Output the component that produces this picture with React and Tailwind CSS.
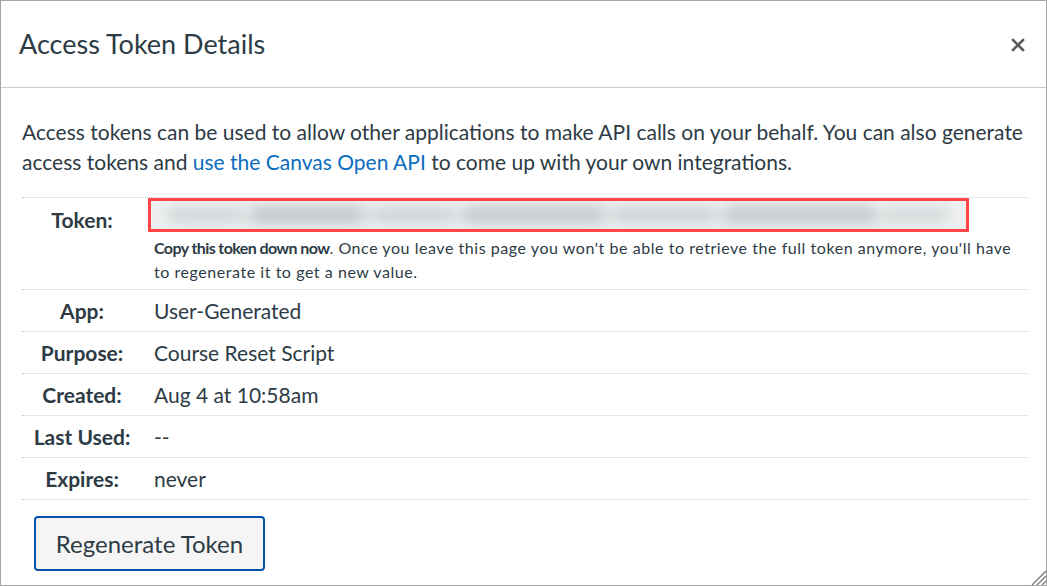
import React from 'react';

const font = { fontFamily: 'Lato, "Noto Sans", sans-serif' };

const Row = ({ label, children }) => (
  <div className="flex h-[42px] items-center border-t border-dotted border-[#c7cdd1]">
    <div className="w-[120px] shrink-0 text-center text-[21px] font-bold text-[#2d3b45]">
      {label}
    </div>
    <div className="pl-[12px] text-[21px] text-[#2d3b45]">{children}</div>
  </div>
);

const BlurredToken = () => (
  <div className="relative -ml-[6px] h-[34px] w-[821px] overflow-hidden border-[3px] border-[#ff4545] bg-[#eef0f1]">
    <div className="absolute inset-0 flex items-center gap-1 px-4 blur-[7px]">
      <span className="h-[14px] w-[80px] rounded-full bg-[#cfd3d5]" />
      <span className="h-[18px] w-[120px] rounded-full bg-[#c3c7ca]" />
      <span className="h-[14px] w-[90px] rounded-full bg-[#cdd0d3]" />
      <span className="h-[18px] w-[150px] rounded-full bg-[#c6cacd]" />
      <span className="h-[14px] w-[110px] rounded-full bg-[#cbced1]" />
      <span className="h-[18px] w-[160px] rounded-full bg-[#c5c9cc]" />
      <span className="h-[14px] w-[70px] rounded-full bg-[#d4d7d9]" />
    </div>
  </div>
);

export default function App() {
  return (
    <div
      className="relative h-[586px] w-[1047px] overflow-hidden border border-[#a6a6a6] bg-white text-[#2d3b45]"
      style={font}
    >
      <header className="flex h-[87px] items-center justify-between border-b border-[#c7cdd1] pl-[18px] pr-[20px]">
        <h1 className="text-[27px] font-normal text-[#2d3b45]">Access Token Details</h1>
        <svg width="16" height="16" viewBox="0 0 16 16" className="mt-[2px]">
          <path d="M3 3 L13 13 M13 3 L3 13" stroke="#5a5a5a" strokeWidth="2.6" strokeLinecap="square" />
        </svg>
      </header>

      <div className="pl-[21px] pr-[18px] pt-[29px]">
        <p className="text-[21px] leading-[30px] text-[#2d3b45]">
          Access tokens can be used to allow other applications to make API calls on your behalf. You can also generate
          access tokens and{' '}
          <a href="#" className="text-[#0b6dbd]">use the Canvas Open API</a> to come up with your own integrations.
        </p>

        <div className="mt-[20px] w-[1006px]">
          <div className="flex border-t border-dotted border-[#c7cdd1] pb-[5px]">
            <div className="w-[120px] shrink-0 pt-[6px] text-center text-[21px] font-bold">
              Token:
            </div>
            <div className="flex flex-col pl-[12px]">
              <BlurredToken />
              <p className="mt-[4px] pr-[4px] text-[16px] leading-[24px] tracking-[0.55px] text-[#2d3b45]">
                <strong className="tracking-[-0.6px]">Copy this token down now</strong>. Once you leave this page you
                won't be able to retrieve the full token anymore, you'll have to regenerate it to get a new value.
              </p>
            </div>
          </div>
          <Row label="App:">User-Generated</Row>
          <Row label="Purpose:">Course Reset Script</Row>
          <Row label="Created:">Aug 4 at 10:58am</Row>
          <Row label="Last Used:">--</Row>
          <Row label="Expires:">never</Row>
          <div className="border-t border-dotted border-[#c7cdd1] pt-[16px] pl-[12px]">
            <button
              type="button"
              className="h-[55px] w-[231px] rounded-[4px] border-2 border-[#0553ab] bg-[#f5f5f5] text-[24px] text-[#2d3b45]"
            >
              Regenerate Token
            </button>
          </div>
        </div>
      </div>

      <svg className="absolute bottom-0 right-0" width="16" height="16" viewBox="0 0 16 16">
        <path d="M16 2 L2 16 M16 7 L7 16 M16 12 L12 16" stroke="#777" strokeWidth="1.3" />
      </svg>
    </div>
  );
}
